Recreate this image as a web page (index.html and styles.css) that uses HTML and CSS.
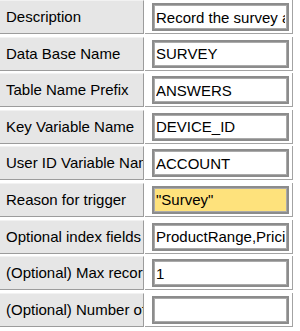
FILE: index.html
```html
<!DOCTYPE html>
<html lang="en">
<head>
    <meta charset="UTF-8">
    <title>Survey trigger settings</title>
    <link rel="stylesheet" href="styles.css">
</head>
<body>

    <div class="form">
        <label class="caption">Description</label>
        <div class="cell"><input type="text" value="Record the survey answers" readonly></div>

        <label class="caption">Data Base Name</label>
        <div class="cell"><input type="text" value="SURVEY" readonly></div>

        <label class="caption">Table Name Prefix</label>
        <div class="cell"><input type="text" value="ANSWERS" readonly></div>

        <label class="caption">Key Variable Name</label>
        <div class="cell"><input type="text" value="DEVICE_ID" readonly></div>

        <label class="caption">User ID Variable Name</label>
        <div class="cell"><input type="text" value="ACCOUNT" readonly></div>

        <label class="caption">Reason for trigger</label>
        <div class="cell"><input type="text" class="highlight" value="&quot;Survey&quot;" readonly></div>

        <label class="caption">Optional index fields</label>
        <div class="cell"><input type="text" value="ProductRange,Pricing" readonly></div>

        <label class="caption">(Optional) Max records</label>
        <div class="cell"><input type="text" value="1" readonly></div>

        <label class="caption">(Optional) Number of days</label>
        <div class="cell"><input type="text" value="" readonly></div>
    </div>

</body>
</html>
```

FILE: styles.css
```css
* {
    margin: 0;
    padding: 0;
    box-sizing: border-box;
}
body {
    background: white;
    font-family: "Liberation Sans", Arial, sans-serif;
    font-size: 15px;
    color: #000;
}
.form {
    display: grid;
    grid-template-columns: 144px 149px;
    grid-auto-rows: 36.6px;
    width: 293px;
}
.caption {
    height: 34px;
    padding-left: 6px;
    line-height: 32px;
    background: #e6e6e6;
    border-top: 1px solid #f2f2f2;
    border-right: 1px solid #9c9c9c;
    border-bottom: 1px solid #9c9c9c;
    white-space: nowrap;
    overflow: hidden;
}
.cell {
    height: 34px;
    margin-left: 1px;
    padding: 3px 3px 0 7px;
    border-right: 1px solid #a3a3a3;
    border-bottom: 1px solid #a3a3a3;
}
.cell input {
    display: block;
    width: 100%;
    height: 28px;
    padding: 0 2px;
    border: 2px solid #8c8c8c;
    box-shadow: inset 0 0 0 1px #aaaaaa;
    background: white;
    font-family: inherit;
    font-size: 15px;
    color: #000;
    outline: none;
}
.cell input.highlight {
    background: #fee27c;
}
```
